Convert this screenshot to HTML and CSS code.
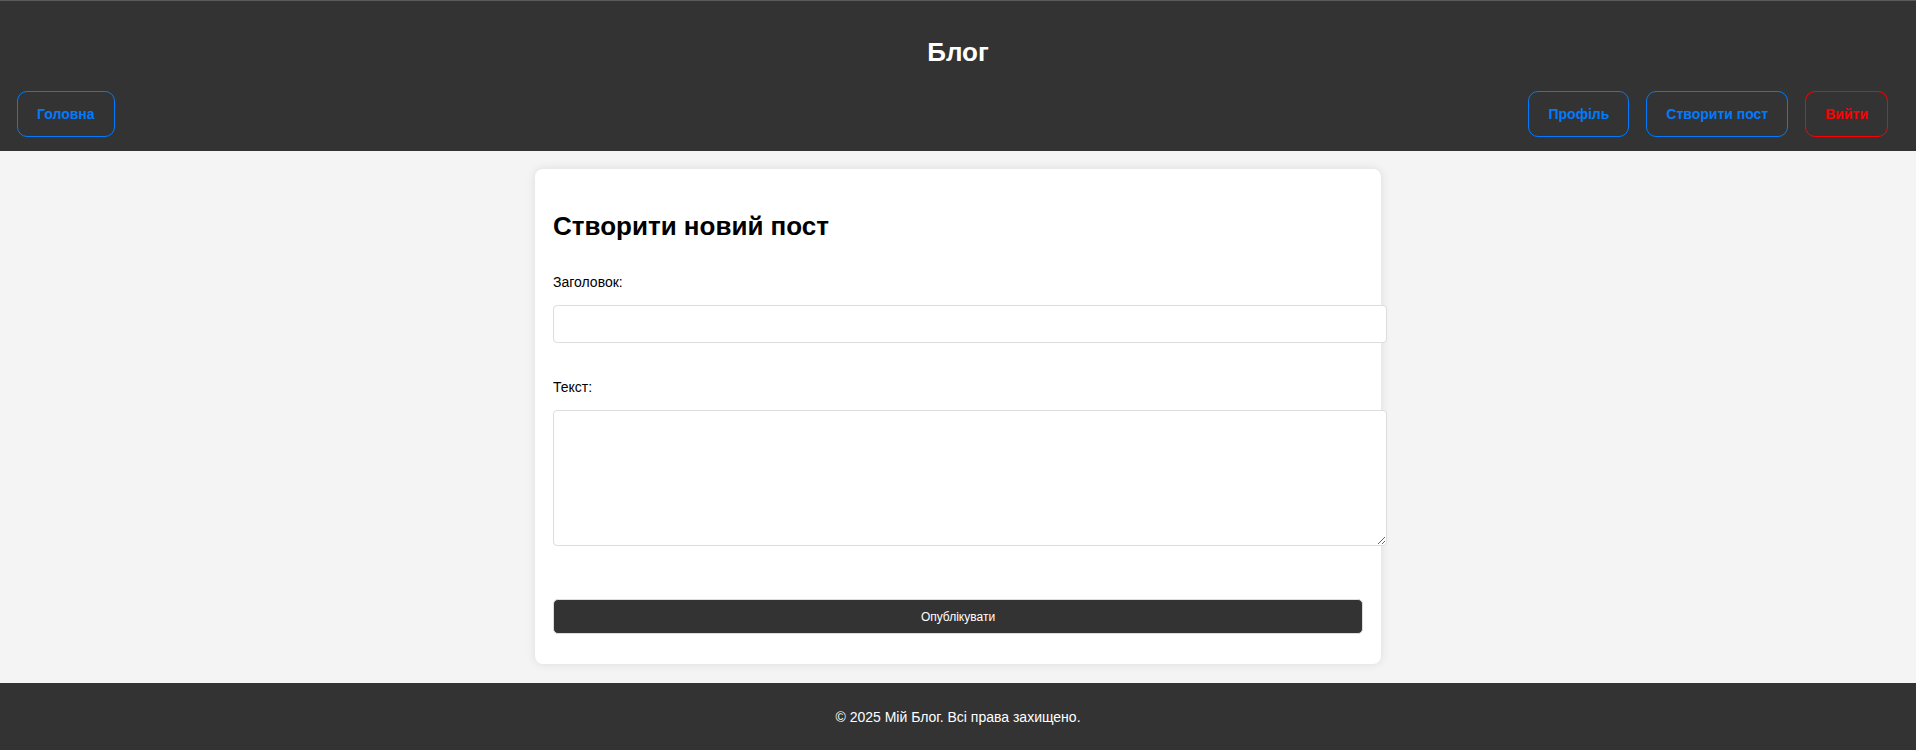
FILE: index.html
```html
<!DOCTYPE html>
<html lang="uk">
<head>
<meta charset="utf-8">
<title>Блог</title>
<link rel="stylesheet" href="styles.css">
</head>
<body>
<header class="site-header">
  <h1 class="site-title">Блог</h1>
  <nav class="nav">
    <div class="nav-group">
      <a class="nav-btn" href="#">Головна</a>
    </div>
    <div class="nav-group">
      <a class="nav-btn" href="#">Профіль</a>
      <a class="nav-btn" href="#">Створити пост</a>
      <a class="nav-btn nav-btn-danger" href="#">Вийти</a>
    </div>
  </nav>
</header>
<main class="main">
  <section class="card">
    <h2 class="card-title">Створити новий пост</h2>
    <form class="post-form">
      <label class="field-label" for="title">Заголовок:</label>
      <input class="field-input" id="title" type="text">
      <label class="field-label field-label-gap" for="body">Текст:</label>
      <textarea class="field-textarea" id="body"></textarea>
      <button class="submit-btn" type="submit">Опублікувати</button>
    </form>
  </section>
</main>
<footer class="site-footer">
  <p class="footer-text">© 2025 Мій Блог. Всі права захищено.</p>
</footer>
</body>
</html>
```
FILE: styles.css
```css
* { box-sizing: border-box; }
html, body { margin: 0; padding: 0; }
body {
  font-family: "Liberation Sans", Arial, sans-serif;
  font-size: 14px;
  background: #f4f4f4;
  color: #000;
}
.site-header {
  background: #333;
  border-top: 1px solid #5a5a5a;
  padding: 36px 0 14px;
  height: 151px;
}
.site-title {
  margin: 0 0 24px;
  text-align: center;
  color: #fff;
  font-size: 26px;
  line-height: 30px;
  font-weight: bold;
}
.nav {
  display: flex;
  justify-content: space-between;
  align-items: center;
  padding: 0 28px 0 17px;
}
.nav-group {
  display: flex;
  gap: 17px;
}
.nav-btn {
  display: inline-block;
  padding: 14px 19px;
  border: 1px solid #007bff;
  border-radius: 10px;
  color: #007bff;
  font-weight: bold;
  font-size: 14px;
  line-height: 16px;
  text-decoration: none;
}
.nav-btn-danger {
  border-color: #ff0000;
  color: #ff0000;
}
.main {
  padding: 18px 0 19px;
}
.card {
  width: 846px;
  margin: 0 auto;
  padding: 18px;
  background: #fff;
  border-radius: 8px;
  box-shadow: 0 0 10px rgba(0, 0, 0, 0.1);
}
.card-title {
  margin: 24px 0 33px;
  font-size: 26px;
  line-height: 30px;
  font-weight: bold;
}
.post-form {
  display: flex;
  flex-direction: column;
  align-items: flex-start;
}
.field-label {
  display: block;
  font-size: 14px;
  line-height: 16px;
  margin-bottom: 15px;
}
.field-label-gap {
  margin-top: 36px;
}
.field-input,
.field-textarea {
  display: block;
  box-sizing: content-box;
  width: 100%;
  padding: 10px 11px;
  border: 1px solid #ddd;
  border-radius: 4px;
  font-family: "Liberation Sans", Arial, sans-serif;
  font-size: 14px;
  line-height: 16px;
  background: #fff;
  flex-shrink: 0;
}
.field-input { height: 16px; }
.field-textarea { height: 114px; resize: vertical; }
.submit-btn {
  margin-top: 53px;
  margin-bottom: 12px;
  width: 100%;
  height: 35px;
  background: #333;
  color: #fff;
  border: 1px solid #ddd;
  border-radius: 5px;
  font-family: "Liberation Sans", Arial, sans-serif;
  font-size: 12px;
}
.site-footer {
  background: #333;
  color: #fff;
  text-align: center;
  height: 68px;
  padding-top: 26px;
}
.footer-text {
  margin: 0;
  font-size: 14px;
  line-height: 16px;
}
```
